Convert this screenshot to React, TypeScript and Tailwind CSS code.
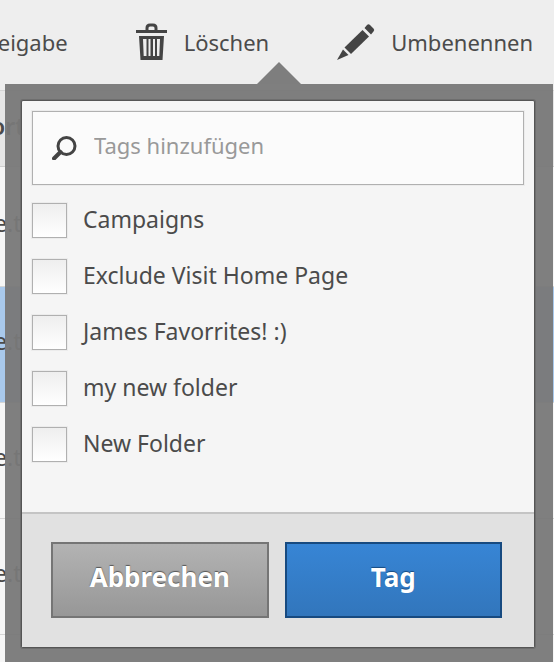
import type { ReactNode } from "react";

const tags = [
  "Campaigns",
  "Exclude Visit Home Page",
  "James Favorrites! :)",
  "my new folder",
  "New Folder",
];

function TrashIcon() {
  return (
    <svg className="h-[38px] w-8 shrink-0" viewBox="0 0 32 38" fill="none" aria-hidden="true">
      <path d="M11 7.500V5q0-3 3-3h3q3 0 3 3v2.500" stroke="#444" strokeWidth="3" />
      <path d="M0 7h31v3H0z" fill="#444" />
      <path
        fillRule="evenodd"
        d="M3 13h25l-1.500 24H4.500zM7 16l.7 17h2.800v-17zM12.500 16v17h2v-17zM17 16v17h2v-17zM21 16v17h2.300l.7-17z"
        fill="#444"
      />
    </svg>
  );
}

function PencilIcon() {
  return (
    <svg className="h-[38px] w-[38px] shrink-0" viewBox="0 0 38 38" fill="#444" aria-hidden="true">
      <path d="M30 2q1.500-1.500 3 0l3.500 3.500q1.500 1.500 0 3L34 11.500 27.500 5z" />
      <path d="M25.500 7L32 13.500 14 31 7.500 24.500z" />
      <path d="M6 26.500l5.500 5.500L0 37z" />
    </svg>
  );
}

function SearchIcon() {
  return (
    <svg className="h-6 w-[26px] shrink-0" viewBox="0 0 26 24" fill="none" stroke="#444" aria-hidden="true">
      <circle cx="14.500" cy="10" r="8.500" strokeWidth="3" />
      <path d="M8.500 16L2 22.500" strokeWidth="4" strokeLinecap="round" />
    </svg>
  );
}

function ToolbarButton({ icon, children }: { icon?: ReactNode; children: ReactNode }) {
  return (
    <button type="button" className="flex h-[38px] shrink-0 items-center gap-4">
      {icon}
      <span>{children}</span>
    </button>
  );
}

function TagPopover() {
  return (
    <div
      role="dialog"
      aria-label="Tag"
      className="absolute top-[84px] right-px left-[5px] bg-[#787878]/95 py-4 pr-[18px] pl-4"
    >
      <svg className="absolute -top-[22px] left-1/2 h-[22px] w-11 -translate-x-1/2" viewBox="0 0 44 22" aria-hidden="true">
        <path d="M0 22L22 0l22 22z" fill="#7e7e7e" />
      </svg>
      <form className="rounded-xs border border-[#555] bg-[#f5f5f5] shadow-[0_0_0_1px_#6e6e6e]">
        <div className="px-[10px] pt-[10px] pb-[50px]">
          <label className="flex h-[74px] items-center gap-4 border border-[#b0b0b0] bg-[#fbfbfb] pr-4 pl-[19px] shadow-[0_0_0_1px_#ececec]">
            <SearchIcon />
            <input
              type="text"
              aria-label="Tags hinzufügen"
              placeholder="Tags hinzufügen"
              className="w-full min-w-0 bg-transparent pb-1.5 text-[22px] outline-none placeholder:text-[#999]"
            />
          </label>
          <ul className="flex flex-col gap-[21px] pt-[18px]">
            {tags.map((tag) => (
              <li key={tag}>
                <label className="flex h-[35px] items-center gap-4">
                  <input
                    type="checkbox"
                    className="h-[35px] w-[35px] shrink-0 appearance-none border border-[#b0b0b0] bg-linear-to-b from-[#eeeeee] to-white shadow-[0_0_0_1px_#ececec] checked:bg-[#3380cc]"
                  />
                  <span className="pb-1">{tag}</span>
                </label>
              </li>
            ))}
          </ul>
        </div>
        <div className="flex gap-4 border-t-2 border-[#c4c4c4] bg-[#e1e1e1] pt-7 pr-8 pb-[29px] pl-[29px] text-[26px] font-bold text-white">
          <button
            type="button"
            className="h-[76px] flex-1 border-2 border-[#757575] bg-linear-to-b from-[#b3b3b3] to-[#979797] pb-1.5 text-shadow-[0_-1px_1px_#555]"
          >
            Abbrechen
          </button>
          <button
            type="submit"
            className="h-[76px] flex-1 border-2 border-[#174a80] bg-linear-to-b from-[#3785d5] to-[#3276bc] pb-1.5 text-shadow-[0_-1px_1px_#174a80]"
          >
            Tag
          </button>
        </div>
      </form>
    </div>
  );
}

export default function App() {
  return (
    <div className="relative h-screen overflow-hidden bg-[#f6f6f6] font-['Noto_Sans',sans-serif] text-[23px] leading-8 text-[#4b4b4b]">
      <div className="flex h-[91px] items-start justify-end gap-[68px] overflow-hidden border-b border-[#d5d5d5] bg-[#eeeeee] pt-[23px] pr-[21px] text-[22px]">
        <ToolbarButton>Freigabe</ToolbarButton>
        <ToolbarButton icon={<TrashIcon />}>Löschen</ToolbarButton>
        <ToolbarButton icon={<PencilIcon />}>Umbenennen</ToolbarButton>
      </div>
      <table className="w-full border-collapse text-left">
        <thead>
          <tr className="h-[75px] border-b border-[#cfcfcf] bg-[#e6e6e6]">
            <th className="pb-1 font-semibold">
              <span className="-ml-[9px]">ort</span>
            </th>
          </tr>
        </thead>
        <tbody>
          <tr className="h-[120px] border-b border-[#d5d5d5]">
            <td className="pb-1.5"><span className="-ml-1.5">e.t</span></td>
          </tr>
          <tr className="h-[116px] border-b border-[#d5d5d5] bg-[#a9c9ec]">
            <td className="pb-1.5"><span className="-ml-1.5">e.t</span></td>
          </tr>
          <tr className="h-[116px] border-b border-[#d5d5d5]">
            <td className="pb-1.5"><span className="-ml-1.5">e.t</span></td>
          </tr>
          <tr className="h-[116px] border-b border-[#d5d5d5]">
            <td className="pb-1.5"><span className="-ml-1.5">e.t</span></td>
          </tr>
        </tbody>
      </table>
      <TagPopover />
    </div>
  );
}
